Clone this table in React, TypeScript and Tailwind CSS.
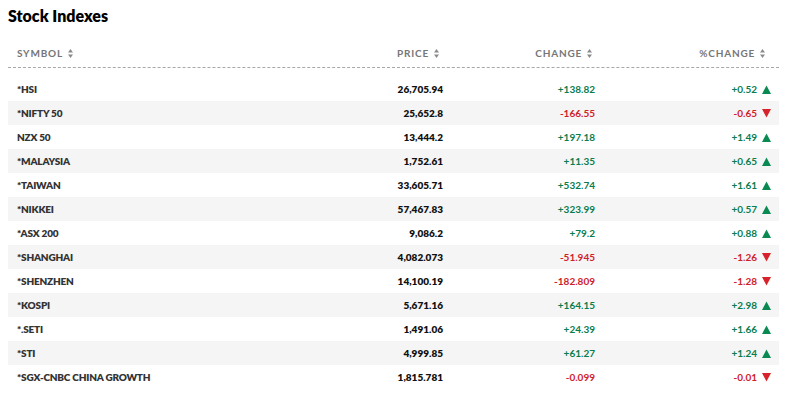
import React from 'react'

type Row = {
  symbol: string
  price: string
  change: string
  pct: string
}

const rows: Row[] = [
  { symbol: '*HSI', price: '26,705.94', change: '+138.82', pct: '+0.52' },
  { symbol: '*NIFTY 50', price: '25,652.8', change: '-166.55', pct: '-0.65' },
  { symbol: 'NZX 50', price: '13,444.2', change: '+197.18', pct: '+1.49' },
  { symbol: '*MALAYSIA', price: '1,752.61', change: '+11.35', pct: '+0.65' },
  { symbol: '*TAIWAN', price: '33,605.71', change: '+532.74', pct: '+1.61' },
  { symbol: '*NIKKEI', price: '57,467.83', change: '+323.99', pct: '+0.57' },
  { symbol: '*ASX 200', price: '9,086.2', change: '+79.2', pct: '+0.88' },
  { symbol: '*SHANGHAI', price: '4,082.073', change: '-51.945', pct: '-1.26' },
  { symbol: '*SHENZHEN', price: '14,100.19', change: '-182.809', pct: '-1.28' },
  { symbol: '*KOSPI', price: '5,671.16', change: '+164.15', pct: '+2.98' },
  { symbol: '*.SETI', price: '1,491.06', change: '+24.39', pct: '+1.66' },
  { symbol: '*STI', price: '4,999.85', change: '+61.27', pct: '+1.24' },
  { symbol: '*SGX-CNBC CHINA GROWTH', price: '1,815.781', change: '-0.099', pct: '-0.01' },
]

function SortIcon() {
  return (
    <svg className="ml-[5px] w-[5px] h-[9px] text-[#8a8a8a]" viewBox="0 0 5 9" fill="currentColor">
      <path d="M2.5 0 5 3.5H0z" />
      <path d="M2.5 9 0 5.5h5z" />
    </svg>
  )
}

function Triangle({ up }: { up: boolean }) {
  return up ? (
    <svg className="ml-[5px] w-[9px] h-[9px] text-[#0a8a52]" viewBox="0 0 9 9" fill="currentColor">
      <path d="M4.5 0.5 9 9H0z" />
    </svg>
  ) : (
    <svg className="ml-[5px] w-[9px] h-[9px] text-[#d8222b]" viewBox="0 0 9 9" fill="currentColor">
      <path d="M0 0h9L4.5 8.5z" />
    </svg>
  )
}

export default function App() {
  return (
    <div className="bg-white w-[787px] h-[396px] px-2 pt-[6px] font-['Lato','Liberation_Sans',sans-serif]">
      <h2 className="text-[16px] leading-[20px] font-extrabold text-black">Stock Indexes</h2>
      <div className="mt-[17px]">
        <div className="grid grid-cols-[1fr_150px_152px_176px] h-[25px] items-center border-b border-dashed border-[#a8a8a8] text-[10px] font-bold tracking-[0.08em] text-[#767676]">
          <div className="flex items-center pl-[9px] pb-[3px]">SYMBOL<SortIcon /></div>
          <div className="flex items-center justify-end pr-[12px] pb-[3px]">PRICE<SortIcon /></div>
          <div className="flex items-center justify-end pr-[11px] pb-[3px]">CHANGE<SortIcon /></div>
          <div className="flex items-center justify-end pr-[14px] pb-[3px]">%CHANGE<SortIcon /></div>
        </div>
        <div className="mt-[9px] text-[10px] font-extrabold text-[#111]">
          {rows.map((r, i) => {
            const up = !r.change.startsWith('-')
            return (
              <div
                key={r.symbol}
                className={`grid grid-cols-[1fr_150px_152px_176px] h-6 items-center ${i % 2 === 1 ? 'bg-[#f5f5f5]' : ''}`}
              >
                <div className="pl-[9px] text-[#333] tracking-[-0.02em]">{r.symbol}</div>
                <div className="text-right pr-[8px]">{r.price}</div>
                <div className={`text-right pr-[8px] font-bold ${up ? 'text-[#0a7d4f]' : 'text-[#d0212a]'}`}>{r.change}</div>
                <div className={`flex items-center justify-end pr-[8px] font-bold ${up ? 'text-[#0a7d4f]' : 'text-[#d0212a]'}`}>
                  {r.pct}
                  <Triangle up={up} />
                </div>
              </div>
            )
          })}
        </div>
      </div>
    </div>
  )
}
